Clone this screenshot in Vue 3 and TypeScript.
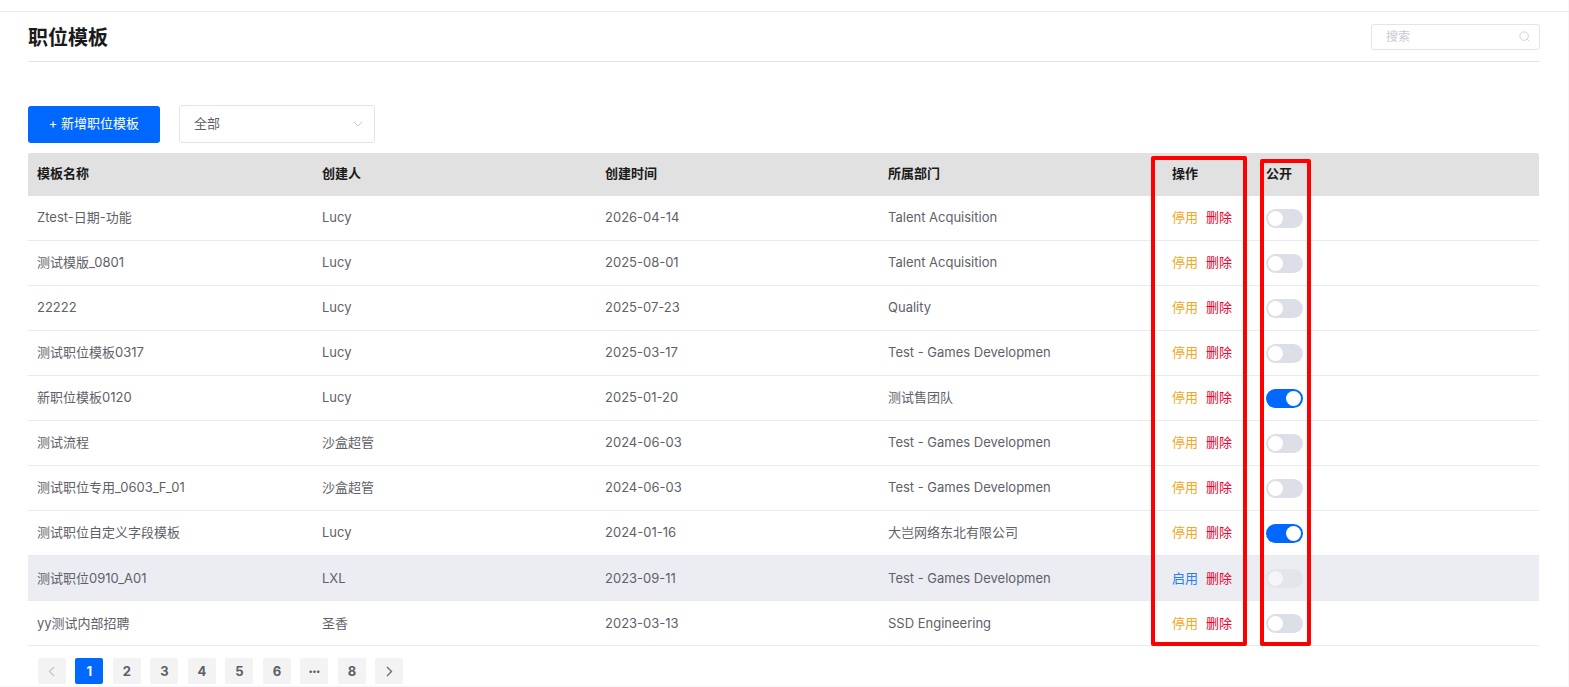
<script setup lang="ts">
interface Row {
  name: string
  creator: string
  date: string
  dept: string
  isPublic: boolean
  disabled?: boolean
}

const rows: Row[] = [
  { name: 'Ztest-日期-功能', creator: 'Lucy', date: '2026-04-14', dept: 'Talent Acquisition', isPublic: false },
  { name: '测试模版_0801', creator: 'Lucy', date: '2025-08-01', dept: 'Talent Acquisition', isPublic: false },
  { name: '22222', creator: 'Lucy', date: '2025-07-23', dept: 'Quality', isPublic: false },
  { name: '测试职位模板0317', creator: 'Lucy', date: '2025-03-17', dept: 'Test - Games Developmen', isPublic: false },
  { name: '新职位模板0120', creator: 'Lucy', date: '2025-01-20', dept: '测试售团队', isPublic: true },
  { name: '测试流程', creator: '沙盒超管', date: '2024-06-03', dept: 'Test - Games Developmen', isPublic: false },
  { name: '测试职位专用_0603_F_01', creator: '沙盒超管', date: '2024-06-03', dept: 'Test - Games Developmen', isPublic: false },
  { name: '测试职位自定义字段模板', creator: 'Lucy', date: '2024-01-16', dept: '大岂网络东北有限公司', isPublic: true },
  { name: '测试职位0910_A01', creator: 'LXL', date: '2023-09-11', dept: 'Test - Games Developmen', isPublic: false, disabled: true },
  { name: 'yy测试内部招聘', creator: '圣香', date: '2023-03-13', dept: 'SSD Engineering', isPublic: false },
]

const pages = ['1', '2', '3', '4', '5', '6', '•••', '8']
</script>

<template>
  <div class="page">
    <header class="head">
      <h1 class="title">职位模板</h1>
      <div class="search">
        <span class="search-text">搜索</span>
        <svg width="11" height="11" viewBox="0 0 12 12" fill="none" stroke="#c9ccd6" stroke-width="1">
          <circle cx="5.6" cy="5.6" r="4.6" />
          <path d="M9 9l1.8 1.8" />
        </svg>
      </div>
    </header>

    <div class="toolbar">
      <button class="add-btn">+ 新增职位模板</button>
      <div class="select">
        <span>全部</span>
        <svg width="10" height="6" viewBox="0 0 10 6" fill="none" stroke="#c9ccd6" stroke-width="1">
          <path d="M.5.5L5 5 9.500.5" />
        </svg>
      </div>
    </div>

    <div class="table">
      <div class="row row-head">
        <div>模板名称</div>
        <div>创建人</div>
        <div>创建时间</div>
        <div>所属部门</div>
        <div>操作</div>
        <div>公开</div>
      </div>
      <div
        v-for="(row, i) in rows"
        :key="row.name"
        class="row"
        :class="{ 'row-off': row.disabled, 'row-low': i >= 8 }"
      >
        <div>{{ row.name }}</div>
        <div>{{ row.creator }}</div>
        <div>{{ row.date }}</div>
        <div>{{ row.dept }}</div>
        <div class="actions">
          <span :class="row.disabled ? 'enable' : 'stop'">{{ row.disabled ? '启用' : '停用' }}</span>
          <span class="del">删除</span>
        </div>
        <div>
          <span class="switch" :class="{ on: row.isPublic, off: row.disabled }"><i></i></span>
        </div>
      </div>
      <div class="mark mark-a"></div>
      <div class="mark mark-b"></div>
    </div>

    <nav class="pager">
      <span class="pg">
        <svg width="7" height="11" viewBox="0 0 7 11" fill="none" stroke="#c4c7cf" stroke-width="1.3"><path d="M6 1L1.500 5.500 6 10" /></svg>
      </span>
      <span v-for="p in pages" :key="p" class="pg" :class="{ cur: p === '1', dots: p === '•••' }">{{ p }}</span>
      <span class="pg">
        <svg width="7" height="11" viewBox="0 0 7 11" fill="none" stroke="#666a75" stroke-width="1.3"><path d="M1 1l4.500 4.500L1 10" /></svg>
      </span>
    </nav>
  </div>
</template>

<style scoped>
.page {
  box-sizing: border-box;
  width: 1569px;
  height: 687px;
  padding: 11px 30px 0 28px;
  overflow: hidden;
  background: #fff;
  font-family: Inter, "Noto Sans CJK SC", sans-serif;
  font-size: 13px;
  line-height: 18px;
  color: #5f6168;
  box-shadow: inset 0 -1px 0 #f5f6f8, inset -1px 0 0 #f7f7f9;
  position: relative;
}

.page::before {
  content: "";
  position: absolute;
  left: 0;
  right: 0;
  top: 11px;
  height: 1px;
  background: #ebecf2;
}

.head {
  display: flex;
  justify-content: space-between;
  align-items: center;
  height: 50px;
  margin-right: -1px;
  border-bottom: 1px solid #e3e4ea;
}

.title {
  margin: 4px 0 0;
  font-size: 20px;
  line-height: 28px;
  font-weight: 700;
  color: #1a1a1a;
}

.search {
  box-sizing: border-box;
  width: 169px;
  height: 26px;
  margin-top: 1px;
  display: flex;
  align-items: center;
  justify-content: space-between;
  padding: 0 9px 0 14px;
  border: 1px solid #e2e3ec;
  border-radius: 3px;
  font-size: 12px;
  color: #c8cad3;
}

.toolbar {
  display: flex;
  align-items: center;
  gap: 19px;
  margin-top: 43px;
}

.add-btn {
  width: 132px;
  height: 37px;
  padding: 0 0 2px;
  border: 0;
  border-radius: 3px;
  background: #0068ff;
  color: #fff;
  font: inherit;
}

.select {
  box-sizing: border-box;
  width: 196px;
  height: 38px;
  display: flex;
  align-items: center;
  justify-content: space-between;
  padding: 0 11px 2px 14px;
  border: 1px solid #e2e3ec;
  border-radius: 3px;
}

.select svg {
  margin-top: 2px;
}

.table {
  position: relative;
  margin-top: 10px;
}

.row {
  display: grid;
  grid-template-columns: 285px 283px 283px 284px 94px 1fr;
  align-items: center;
  height: 45px;
  box-sizing: border-box;
  padding: 0 0 2px 9px;
  border-bottom: 1px solid #e8ebf0;
}

.row-low {
  padding: 0 0 0 9px;
}

.row-head {
  height: 43px;
  padding: 0 0 3px 9px;
  border-bottom: 0;
  border-radius: 2px 2px 0 0;
  background: #e1e1e1;
  color: #1a1a1a;
  font-weight: 600;
}

.row-off {
  background: #ecedf3;
}

.actions {
  display: flex;
  gap: 8px;
}

.stop {
  color: #f5a623;
}

.enable {
  color: #2a7cf6;
}

.del {
  color: #f5002d;
}

.switch {
  box-sizing: border-box;
  display: flex;
  width: 37px;
  height: 19px;
  padding: 2px;
  margin-top: 3px;
  border-radius: 10px;
  background: #dcdfe7;
}

.row-low .switch {
  margin-top: 1px;
}

.switch i {
  width: 15px;
  height: 15px;
  border-radius: 50%;
  background: #fff;
}

.switch.on {
  justify-content: flex-end;
  background: #0068ff;
}

.switch.off {
  background: #e4e5ea;
}

.switch.off i {
  background: #f5f5f8;
}

.mark {
  position: absolute;
  box-sizing: border-box;
  border: 4px solid #ff0000;
  border-radius: 2px;
  pointer-events: none;
}

.mark-a {
  left: 1123px;
  top: 3px;
  width: 96px;
  height: 490px;
}

.mark-b {
  left: 1232px;
  top: 6px;
  width: 51px;
  height: 487px;
}

.pager {
  display: flex;
  gap: 9.5px;
  margin-top: 12px;
  margin-left: 9.9px;
}

.pg {
  width: 28px;
  height: 26px;
  display: flex;
  align-items: center;
  justify-content: center;
  border-radius: 2px;
  background: #f3f3f3;
  color: #5c5f66;
  font-size: 13px;
  font-weight: 700;
}

.pg.cur {
  background: #0068ff;
  color: #fff;
}

.pg.dots {
  font-size: 8px;
}
</style>
